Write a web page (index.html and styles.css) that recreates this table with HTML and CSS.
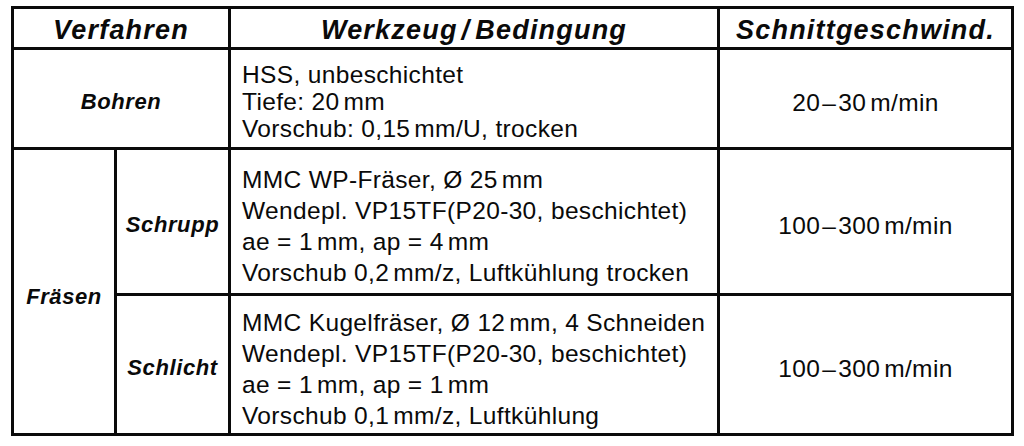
FILE: index.html
```html
<!DOCTYPE html>
<html lang="de">
<head>
<meta charset="utf-8">
<title>Schnittgeschwindigkeiten</title>
<link rel="stylesheet" href="styles.css">
</head>
<body>
<div class="table">
  <div class="cell head span2">Verfahren</div>
  <div class="cell head">Werkzeug<span class="sl">/</span>Bedingung</div>
  <div class="cell head">Schnittgeschwind.</div>

  <div class="cell label span2 bohren">Bohren</div>
  <div class="cell text bohr">
    <span>HSS, unbeschichtet</span>
    <span>Tiefe: 20<span class="u">mm</span></span>
    <span>Vorschub: 0,15<span class="u">mm/U</span>, trocken</span>
  </div>
  <div class="cell value"><span>20<span class="d">–</span>30<span class="u">m/min</span></span></div>

  <div class="cell label fraesen">Fräsen</div>
  <div class="cell label sub">Schrupp</div>
  <div class="cell text fr">
    <span>MMC WP-Fräser, Ø 25<span class="u">mm</span></span>
    <span>Wendepl. VP15TF(P20-30, beschichtet)</span>
    <span>ae = 1<span class="u">mm</span>, ap = 4<span class="u">mm</span></span>
    <span>Vorschub 0,2<span class="u">mm/z</span>, Luftkühlung trocken</span>
  </div>
  <div class="cell value"><span>100<span class="d">–</span>300<span class="u">m/min</span></span></div>

  <div class="cell label sub">Schlicht</div>
  <div class="cell text fr">
    <span>MMC Kugelfräser, Ø 12<span class="u">mm</span>, 4 Schneiden</span>
    <span>Wendepl. VP15TF(P20-30, beschichtet)</span>
    <span>ae = 1<span class="u">mm</span>, ap = 1<span class="u">mm</span></span>
    <span>Vorschub 0,1<span class="u">mm/z</span>, Luftkühlung</span>
  </div>
  <div class="cell value"><span>100<span class="d">–</span>300<span class="u">m/min</span></span></div>
</div>
</body>
</html>
```
FILE: styles.css
```css
html, body {
  margin: 0;
  padding: 0;
  background: #fff;
}
body {
  font-family: "Liberation Sans", Arial, sans-serif;
  color: #0a0a0a;
}
.table {
  margin: 6px 0 0 11px;
  width: 1003px;
  box-sizing: border-box;
  display: grid;
  grid-template-columns: 100px 111px 486px 291px;
  grid-template-rows: 38px 97px 143px 137px;
  gap: 3px;
  padding: 3px;
  background: #0a0a0a;
}
.cell {
  background: #fff;
  display: flex;
  flex-direction: column;
  justify-content: center;
  align-items: center;
  box-sizing: border-box;
}
.span2 {
  grid-column: span 2;
}
.head {
  display: block;
  text-align: center;
  font-weight: bold;
  font-style: italic;
  font-size: 27px;
  letter-spacing: 1.2px;
  line-height: 38px;
  padding-top: 2px;
}
.sl {
  margin: 0 5px 0 4px;
}
.u {
  margin-left: 4px;
}
.d {
  margin: 0 2px;
}
.label {
  font-weight: bold;
  font-style: italic;
  font-size: 22px;
  letter-spacing: 0.6px;
}
.bohren {
  padding-top: 6px;
}
.sub {
  padding-top: 7px;
}
.fraesen {
  grid-row: span 2;
  padding-top: 10px;
}
.text {
  align-items: flex-start;
  padding-left: 11px;
  font-size: 24.5px;
  letter-spacing: 0.35px;
}
.bohr {
  line-height: 27px;
  padding-top: 6px;
}
.fr {
  line-height: 31px;
  padding-top: 8px;
}
.value {
  font-size: 24.5px;
  letter-spacing: 0.35px;
  padding-top: 8px;
  white-space: nowrap;
}
```
